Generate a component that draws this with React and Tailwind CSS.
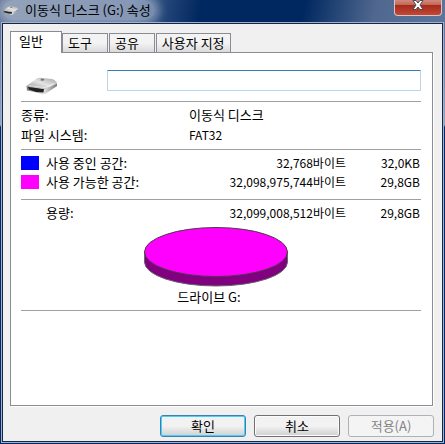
import React, { useState } from "react";

const tabs = ["도구", "공유", "사용자 지정"];

const space = [
  { label: "사용 중인 공간:", bytes: "32,768바이트", size: "32,0KB", color: "bg-[#0000ff]" },
  { label: "사용 가능한 공간:", bytes: "32,098,975,744바이트", size: "29,8GB", color: "bg-[#ff00ff]" },
];

function DriveIcon({ className }) {
  return (
    <svg viewBox="0 0 32 18" className={className} aria-hidden="true">
      <defs>
        <linearGradient id="driveTop" x1="0" y1="1" x2="1" y2="0">
          <stop offset="0" stopColor="#8c8c8c" />
          <stop offset="0.5" stopColor="#e4e4e4" />
          <stop offset="1" stopColor="#a0a0a0" />
        </linearGradient>
        <linearGradient id="driveSide" x1="0" y1="0" x2="1" y2="0">
          <stop offset="0" stopColor="#777" />
          <stop offset="0.55" stopColor="#e6e6e6" />
          <stop offset="1" stopColor="#777" />
        </linearGradient>
      </defs>
      <path d="M1 13 L17 17.5 L31 9 L31 7 L17 14 Z" fill="#ddd" />
      <path d="M0.5 9 L18 11.5 L31 6 L31 9 L19 17 L1 13.5 Z" fill="url(#driveSide)" />
      <path d="M2 10 L18 12 L17.5 15.6 L10 15 L3 12.6 Z" fill="#222" />
      <path d="M0.5 9 L10 2 Q12 0.6 14 0.7 L26 2 Q28.5 2.4 31.5 6.4 L19 12 Z" fill="url(#driveTop)" />
      <path d="M3 8.6 L19 10.6 L28 6.4" fill="none" stroke="#fff" strokeWidth="0.8" opacity="0.7" />
      <path d="M15 1.6 L18.5 2 L17.5 3.8 L14.5 3.4 Z" fill="#777" />
    </svg>
  );
}

function Usage() {
  return (
    <svg viewBox="0 0 144 60" className="mr-[10px] h-[60px] w-36" role="img" aria-label="드라이브 G:">
      <path
        d="M0.5 25 V35 A71.5 24 0 0 0 143.5 35 V25 Z"
        fill="#800080"
        stroke="#666"
        strokeWidth="1"
      />
      <ellipse cx="72" cy="25" rx="71.5" ry="24.5" fill="#ff00ff" stroke="#4a3a4a" strokeWidth="1" />
    </svg>
  );
}

export default function App() {
  const [label, setLabel] = useState("");

  return (
    <div className="flex min-h-screen flex-col bg-[#002868] bg-[linear-gradient(180deg,#50688e_0,#8fa5c4_125px,#002868_127px)] px-[2px] pb-[2px] font-['Noto_Sans_CJK_KR','Liberation_Sans',sans-serif] text-[13px] leading-5 text-black">
      <header className="-mx-[2px] flex h-[23px] items-start justify-between bg-[linear-gradient(100deg,#5c7095_0,#44618f_30%,#002860_45%,#002860_68%,#50688f_84%,#5b759b_100%)] pl-[3px] pr-[3px]">
        <h1 className="flex items-center gap-[6px] rounded-full bg-white/35 pr-1 font-normal shadow-[0_0_8px_5px_rgba(255,255,255,0.35)]">
          <DriveIcon className="h-[9px] w-4" />
          이동식 디스크 (G:) 속성
        </h1>
        <button
          type="button"
          aria-label="닫기"
          className="flex h-4 w-12 items-center justify-center rounded-b-[4px] border border-t-0 border-[#d9c4c8] bg-[linear-gradient(180deg,#d08a7c_0,#c4685a_30%,#a52a1b_35%,#c44736_100%)]"
        >
          <svg viewBox="0 0 12 10" className="mb-[5px] h-[10px] w-3" aria-hidden="true">
            <path d="M1 0.5 H4 L6 3 L8 0.5 H11 L8 5 L11 9.5 H8 L6 7 L4 9.5 H1 L4 5 Z" fill="#fff" stroke="#4b4b58" strokeWidth="1" />
          </svg>
        </button>
      </header>

      <main className="flex flex-1 flex-col border border-[#1c2440] bg-[#f0f0f0] px-[7px] pb-1 pt-[7px] outline outline-[#9db3d4]">
        <div role="tablist" className="flex items-end">
          <button type="button" role="tab" aria-selected="true" className="relative z-10 -mb-px h-[22px] w-[52px] border border-b-0 border-[#898c95] bg-white pb-1 pl-2 text-left leading-4">
            일반
          </button>
          {tabs.map((tab) => (
            <button
              key={tab}
              type="button"
              role="tab"
              aria-selected="false"
              className="mr-px h-[19px] border border-b-0 border-[#898c95] bg-linear-to-b from-[#f3f3f3] from-50% to-[#dadada] pl-[5px] pr-[5px] leading-4 nth-2:pr-[15px] nth-3:pr-[15px]"
            >
              {tab}
            </button>
          ))}
        </div>

        <section className="mr-[2px] flex flex-1 flex-col border border-[#898c95] bg-white pl-[10px] pr-[11px] pt-[17px] shadow-[1px_1px_0_#fff]">
          <div className="flex items-start pb-[6px]">
            <DriveIcon className="mt-[7px] ml-[5px] h-[18px] w-8 shrink-0" />
            <input
              aria-label="볼륨 이름"
              value={label}
              onChange={(e) => setLabel(e.target.value)}
              className="ml-[49px] h-[21px] min-w-0 flex-1 rounded-[1px] border border-[#b5d6ee] border-t-[#3d7bad] bg-white px-1 outline-none"
            />
          </div>

          <dl className="grid grid-cols-[168px_1fr] border-t border-[#a0a0a0] pt-[3px] pb-1">
            <dt>종류:</dt>
            <dd>이동식 디스크</dd>
            <dt>파일 시스템:</dt>
            <dd className="text-xs leading-5">FAT32</dd>
          </dl>

          <table className="w-full border-separate border-spacing-0 border-y border-[#a0a0a0] pt-[3px] pb-2 leading-[19px]">
            <tbody>
              {space.map((row) => (
                <tr key={row.label}>
                  <td className="w-[25px] p-0">
                    <span className={`block h-[14px] w-[18px] ${row.color}`} />
                  </td>
                  <th scope="row" className="p-0 text-left font-normal">{row.label}</th>
                  <td className="p-0 text-right text-xs leading-[19px]">{row.bytes}</td>
                  <td className="w-[75px] p-0 pr-px text-right text-xs leading-[19px]">{row.size}</td>
                </tr>
              ))}
            </tbody>
          </table>

          <div className="flex pt-[3px] pl-[25px]">
            <span className="flex-1">용량:</span>
            <span className="text-xs leading-5">32,099,008,512바이트</span>
            <span className="w-[75px] pr-px text-right text-xs leading-5">29,8GB</span>
          </div>

          <figure className="flex flex-col items-center border-b border-[#a0a0a0] pt-1 pb-[3px]">
            <Usage />
            <figcaption className="mr-6">드라이브 G:</figcaption>
          </figure>
        </section>

        <footer className="mr-px flex justify-end gap-2 pt-[9px]">
          <button type="button" className="h-[22px] w-[86px] rounded-[3px] border border-[#3c7fb1] bg-linear-to-b from-[#f2f2f2] from-50% to-[#cfcfcf] leading-4 shadow-[inset_0_0_0_1px_#48d0f5]">
            확인
          </button>
          <button type="button" className="h-[22px] w-[86px] rounded-[3px] border border-[#707070] bg-linear-to-b from-[#f2f2f2] from-50% to-[#cfcfcf] leading-4 shadow-[inset_0_0_0_1px_#fcfcfc]">
            취소
          </button>
          <button type="button" disabled className="h-[22px] w-[86px] rounded-[3px] border border-[#adb2b5] bg-[#f4f4f4] leading-4 text-[#838383]">
            적용(A)
          </button>
        </footer>
      </main>
    </div>
  );
}
